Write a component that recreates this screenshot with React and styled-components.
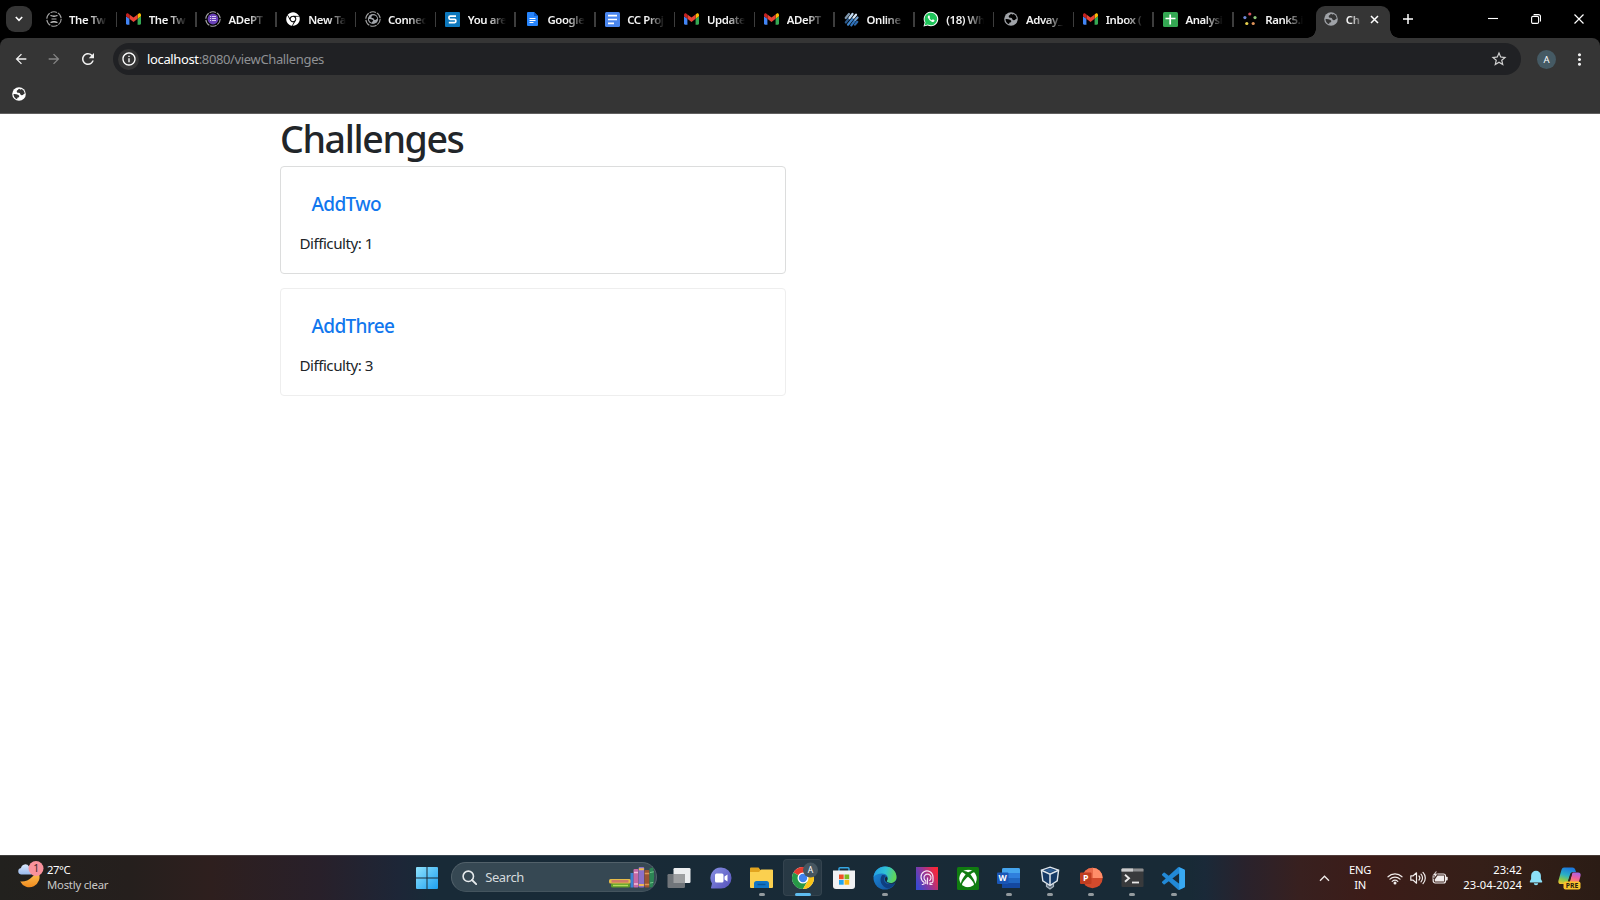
import React from "react";
import styled, { createGlobalStyle, css } from "styled-components";
import { MdArrowBack, MdArrowForward, MdRefresh, MdInfoOutline, MdStarBorder, MdMoreVert } from "react-icons/md";
import { FaChrome, FaXbox } from "react-icons/fa";

const GlobalStyle = createGlobalStyle`
  * { box-sizing: border-box; }
  html, body { margin: 0; padding: 0; }
  body { background: #fff; overflow: hidden; font-family: "Noto Sans", "Open Sans", sans-serif; }
  svg { display: block; flex: none; }
`;

const Screen = styled.div`
  width: 1600px;
  height: 900px;
  display: flex;
  flex-direction: column;
  overflow: hidden;
`;

/* ---------- browser chrome ---------- */

const TabStrip = styled.header`
  height: 38px;
  flex: none;
  background: #000;
  display: flex;
  align-items: stretch;
  padding-left: 6px;
`;

const TabSearch = styled.div`
  width: 26px;
  height: 26px;
  margin-top: 6px;
  margin-right: 5.3px;
  border-radius: 9px;
  background: #353535;
  display: flex;
  align-items: center;
  justify-content: center;
`;

const Tab = styled.div`
  width: 79.75px;
  display: flex;
  align-items: center;
  padding-left: 7.7px;
`;

const TabIcon = styled.span`
  width: 18px;
  margin-right: 6px;
  display: flex;
  justify-content: center;
`;

const TabTitle = styled.span`
  width: ${(p) => p.$width || 40}px;
  white-space: nowrap;
  color: #f4f4f4;
  font-size: 11.4px;
  font-weight: 600;
  letter-spacing: -0.4px;
  line-height: 18px;
  padding-top: 1px;
  mask-image: linear-gradient(90deg, #000 ${(p) => (p.$width ? 30 : 50)}%, transparent ${(p) => (p.$width ? 120 : 95)}%);
`;

const TabDivider = styled.span`
  width: 1.5px;
  height: 15px;
  margin-left: auto;
  background: #3d3d3d;
`;

const ActiveTab = styled.div`
  width: 74px;
  height: 32px;
  margin: 6px 0 0 2.5px;
  border-radius: 9px 9px 0 0;
  background: #353535;
  display: flex;
  align-items: center;
  padding: 0 0 6px 6px;
  position: relative;
  &::before, &::after {
    content: "";
    position: absolute;
    bottom: 0;
    width: 9px;
    height: 9px;
  }
  &::before { left: -9px; background: radial-gradient(circle at 0 0, transparent 8.5px, #353535 9px); }
  &::after { right: -9px; background: radial-gradient(circle at 100% 0, transparent 8.5px, #353535 9px); }
`;

const TabClose = styled.span`
  margin-left: 9.5px;
`;

const NewTab = styled.div`
  width: 37px;
  display: flex;
  align-items: center;
  justify-content: center;
`;

const WindowButtons = styled.div`
  margin-left: auto;
  display: flex;
  align-items: center;
`;

const WindowButton = styled.div`
  width: 43px;
  display: flex;
  justify-content: center;
`;

const ToolbarBack = styled.div`
  flex: none;
  height: 75.5px;
  background: #000;
`;

const Toolbar = styled.div`
  height: 75.5px;
  background: #353535;
  border-radius: 8px 8px 0 0;
  border-bottom: 1px solid #605f5f;
`;

const NavRow = styled.nav`
  height: 42px;
  display: flex;
  align-items: center;
  padding-left: 4px;
`;

const NavButton = styled.div`
  width: 33.5px;
  display: flex;
  justify-content: center;
  color: ${(p) => (p.$dim ? "#858585" : "#f1f1f1")};
`;

const AddressBar = styled.div`
  width: 1408px;
  height: 32px;
  margin-left: 8.5px;
  border-radius: 16px;
  background: #202124;
  display: flex;
  align-items: center;
  padding: 0 13px 0 5px;
`;

const SiteInfo = styled.span`
  width: 21px;
  height: 21px;
  border-radius: 50%;
  background: #353535;
  color: #fff;
  display: flex;
  align-items: center;
  justify-content: center;
`;

const Url = styled.span`
  margin-left: 8px;
  flex: 1;
  color: #8f9194;
  font-size: 13px;
  letter-spacing: -0.36px;
  b { font-weight: 400; color: #fff; }
`;

const Profile = styled.span`
  width: 19px;
  height: 19px;
  margin-left: 16px;
  border-radius: 50%;
  background: #455a64;
  color: #fff;
  font-size: 9.5px;
  display: flex;
  align-items: center;
  justify-content: center;
`;

const MenuButton = styled.span`
  margin-left: 14px;
  color: #f1f1f1;
`;

const BookmarkRow = styled.div`
  height: 32px;
  padding: 6px 0 0 10.5px;
`;

/* ---------- page ---------- */

const Page = styled.main`
  flex: 1;
  background: #fff;
  padding: 0 0 0 280px;
  color: #212529;
`;

const Heading = styled.h1`
  margin: 0;
  height: 52.7px;
  padding-top: 2px;
  font-size: 37.6px;
  font-weight: 500;
  line-height: 46px;
  letter-spacing: -1.4px;
`;

const Card = styled.section`
  width: 506px;
  height: 108px;
  margin-bottom: 14px;
  border: 1px solid ${(p) => p.$border};
  border-radius: 4px;
  padding: 19px 18.5px;
`;

const CardTitle = styled.a`
  display: block;
  height: 37px;
  padding: 6px 12px;
  color: #1177ee;
  font-size: 19px;
  font-weight: 500;
  line-height: 24px;
  letter-spacing: -0.65px;
`;

const CardText = styled.p`
  margin: 9px 0 0;
  font-size: 15.2px;
  line-height: 23px;
  letter-spacing: -0.5px;
`;

/* ---------- taskbar ---------- */

const Taskbar = styled.footer`
  height: 45px;
  flex: none;
  display: flex;
  align-items: stretch;
  border-top: 1px solid rgba(150, 150, 150, 0.25);
  color: #fff;
  background: linear-gradient(90deg, #22211e 0, #251f1d 130px, #2e1f1e 210px, #28202a 320px, #1d2637 398px, #182a37 430px, #182a36 1190px, #1a2938 1205px, #29222c 1245px, #38201f 1300px, #3c1c18 1370px, #351f18 1480px, #2b1c15 1600px);
`;

const Weather = styled.div`
  width: 406px;
  display: flex;
  padding-left: 17px;
`;

const WeatherIconSlot = styled.span`
  padding-top: 5px;
`;

const WeatherText = styled.div`
  padding-top: 6px;
  margin-left: 2px;
  font-size: 11.3px;
  line-height: 15px;
  letter-spacing: -0.45px;
  span { display: block; }
  span + span { color: #c9c8c7; letter-spacing: -0.22px; }
`;

const Dock = styled.div`
  display: flex;
  align-items: stretch;
`;

const DockItem = styled.div`
  width: 41.2px;
  display: flex;
  align-items: center;
  justify-content: center;
  position: relative;
  ${(p) => p.$active && css`
    &::before {
      content: "";
      position: absolute;
      inset: 3px 2px 4px 1px;
      border-radius: 4px;
      background: rgba(255, 255, 255, 0.07);
      border: 1px solid rgba(255, 255, 255, 0.06);
    }
  `}
  ${(p) => p.$open && css`
    &::after {
      content: "";
      position: absolute;
      bottom: 4px;
      left: calc(50% - ${p.$active ? 8 : 3}px);
      width: ${p.$active ? 16 : 6}px;
      height: 3px;
      border-radius: 2px;
      background: ${p.$active ? "#5fbdf0" : "#939a9e"};
    }
  `}
  svg { position: relative; }
`;

const SearchBox = styled.div`
  width: 206px;
  height: 30px;
  margin: 6px 1.6px 0 4px;
  border-radius: 15px;
  background: #364853;
  border: 1px solid #52616a;
  border-bottom-color: #44545e;
  display: flex;
  align-items: center;
  padding: 0 1px 0 10px;
  font-size: 13px;
  color: #d5dadd;
  letter-spacing: -0.4px;
  span { margin-left: 8px; flex: 1; }
`;

const Tray = styled.div`
  margin-left: auto;
  width: 283px;
  display: flex;
  align-items: center;
`;

const TrayText = styled.div`
  width: ${(p) => p.$width}px;
  text-align: ${(p) => p.$align};
  font-size: 11.2px;
  line-height: 15px;
  letter-spacing: ${(p) => p.$track}px;
  white-space: nowrap;
  padding-bottom: 2px;
`;

const TrayIcon = styled.span`
  margin-left: ${(p) => p.$gap}px;
`;

/* ---------- favicons ---------- */

const Globe = ({ land = "#a0a3a8", sea = "#353535", size = 16, ...rest }) => (
  <svg width={size} height={size} viewBox="0 0 16 16" {...rest}>
    <circle cx="8" cy="8" r="6.800" fill={land} />
    <path d="M8.300 2.800Q7.200 3 6.900 4q-1.300.3-1.200 1.700.2.900 1.200 1 1.800-.2 2 .6.2 1.600 1.600 1.900 1.600.1 2.300-1.200l.9-.3a5.600 5.600 0 0 0-3.300-4.700q-.5.600-1.200.5z" fill={sea} />
    <path d="M2.500 8q1.500-.2 3 .3 2.600.4 2.800 1.700.1 1.500-1.500 1.600-.8.400-.6 1.600A5.600 5.600 0 0 1 2.500 8z" fill={sea} />
  </svg>
);

const Gmail = () => (
  <svg width="15" height="12" viewBox="52 42 88 66">
    <path fill="#4285f4" d="M58 108h14V74L52 59v43c0 3.320 2.690 6 6 6" />
    <path fill="#34a853" d="M120 108h14c3.320 0 6-2.690 6-6V59l-20 15" />
    <path fill="#fbbc04" d="M120 48v26l20-15v-8c0-7.420-8.470-11.650-14.400-7.200" />
    <path fill="#ea4335" d="M72 74V48l24 18 24-18v26L96 92" />
    <path fill="#c5221f" d="M52 51v8l20 15V48l-5.600-4.200c-5.940-4.450-14.400-.22-14.400 7.200" />
  </svg>
);

const Ring = ({ children }) => (
  <svg width="16" height="16" viewBox="0 0 16 16">
    <circle cx="8" cy="8" r="7.200" fill="none" stroke="#a0a0a0" strokeWidth="1.100" strokeDasharray="6.500 1.040" />
    {children}
  </svg>
);

const RingTower = () => (
  <Ring>
    <path d="M4.500 4.500q3.500 1.500 7 0M4.500 11.500q3.500-1.500 7 0" stroke="#c8c8c8" strokeWidth="1.300" fill="none" />
    <path d="M5.500 8h5" stroke="#555" strokeWidth="2" />
  </Ring>
);

const RingForms = () => (
  <Ring>
    <circle cx="8" cy="8" r="5.400" fill="#6941b8" />
    <path d="M5 5.500h1M6.800 5.500h4.200M5 7.500h1M6.800 7.500h4.200M5 9.500h1M6.800 9.500h4.200" stroke="#d9ccf2" strokeWidth="1" />
  </Ring>
);

const RingGlobe = () => (
  <Ring>
    <Globe x="2" y="2" size={12} sea="#000" />
  </Ring>
);

const SLogo = () => (
  <svg width="15" height="15" viewBox="0 0 15 15">
    <rect width="15" height="15" rx="1" fill="#0d78bd" />
    <path d="M11 4.200H5.200q-1.300 0-1.300 1.600t1.300 1.600h4.400q1.300 0 1.300 1.600t-1.300 1.700H3.800" fill="none" stroke="#fff" strokeWidth="1.700" />
  </svg>
);

const DocFile = () => (
  <svg width="11" height="14" viewBox="0 0 11 14">
    <path d="M1 0h6l4 4v9a1 1 0 0 1-1 1H1a1 1 0 0 1-1-1V1a1 1 0 0 1 1-1z" fill="#2684fc" />
    <path d="M7 0l4 4H7z" fill="#0b5cd0" />
    <path d="M2.500 6.500h6M2.500 8.500h6M2.500 10.500h4" stroke="#fff" />
  </svg>
);

const DocSquare = () => (
  <svg width="15" height="15" viewBox="0 0 15 15">
    <rect width="15" height="15" rx="1.500" fill="#4a86ee" />
    <path d="M3 3.700h9M3 7.500h9M3 11.300h6" stroke="#fff" strokeWidth="1.700" />
  </svg>
);

const Sheet = () => (
  <svg width="15" height="15" viewBox="0 0 15 15">
    <rect width="15" height="15" rx="1.500" fill="#34a853" />
    <path d="M2.500 6.500h10M7.200 2.500v10" stroke="#fff" strokeWidth="1.700" />
  </svg>
);

const BlueStripes = () => (
  <svg width="15" height="15" viewBox="0 0 15 15">
    <g fill="none" strokeLinecap="round" strokeWidth="2.200">
      <path d="M1.700 6L5 2" stroke="#8199b0" />
      <path d="M1.800 10.500L4.500 7" stroke="#2c5a8c" />
      <path d="M5.500 6L8.500 2" stroke="#c3dcf3" />
      <path d="M4 12.700L8.500 7" stroke="#3f83c8" />
      <path d="M9.500 5.700L12 2.700" stroke="#d7e6f4" />
      <path d="M7.300 13.300L10.500 9" stroke="#2f73bd" />
      <path d="M11.300 8L13.500 5.500" stroke="#6f9fd0" />
      <path d="M11 12.600L13.300 9.800" stroke="#2b67ab" />
    </g>
  </svg>
);

const WhatsApp = () => (
  <svg width="16" height="16" viewBox="0 0 16 16">
    <path d="M.5 15.500L1.600 11.600A7.300 7.300 0 1 1 4.600 14.500z" fill="#fff" />
    <path d="M1.600 14.400L2.500 11.300A6.300 6.300 0 1 1 4.800 13.500z" fill="#1fc45a" />
    <path d="M5.600 4.400q-1.200.8-.8 2.200 1.200 3.200 4.300 4.300 1.700.4 2.300-.9.200-.8-.1-1L9.800 8.300l-.9.900Q7.400 8.700 6.500 7l.6-.8-.7-1.600q-.3-.4-.8-.2z" fill="#fff" />
  </svg>
);

const Dots = () => (
  <svg width="14" height="14" viewBox="0 0 14 14">
    <circle cx="6.800" cy="2" r="1.600" fill="#d0505c" />
    <circle cx="1.900" cy="5.600" r="1.600" fill="#6f86d6" />
    <circle cx="12" cy="5.600" r="1.600" fill="#8fc377" />
    <circle cx="3.800" cy="11.500" r="1.600" fill="#e6d04e" />
    <circle cx="10.200" cy="11.500" r="1.600" fill="#e0945a" />
  </svg>
);

/* ---------- taskbar drawings ---------- */

const WeatherIcon = () => (
  <svg width="28" height="28" viewBox="0 0 28 28">
    <defs>
      <linearGradient id="moon" x1="0" y1="0" x2="0" y2="1">
        <stop offset="0" stopColor="#ffc257" /><stop offset="1" stopColor="#f08b1d" />
      </linearGradient>
      <linearGradient id="cloud" x1="0" y1="0" x2="0" y2="1">
        <stop offset="0" stopColor="#d9e8fb" /><stop offset="1" stopColor="#9bbbed" />
      </linearGradient>
    </defs>
    <path d="M21.500 12.500a10 10 0 1 1-18.300 9q7 .5 11.800-4.500 2.500-2.500 6.500-4.500z" fill="url(#moon)" transform="translate(0 -1)" />
    <path d="M4 13.500a3.300 3.300 0 0 1 0-6.500 4.300 4.300 0 0 1 8-1.500q3 3 2.500 8z" fill="url(#cloud)" />
    <circle cx="19" cy="7.500" r="7.500" fill="#f9929c" />
    <text x="19.300" y="11.300" textAnchor="middle" fontSize="10.500" fill="#41262a">1</text>
  </svg>
);

const WindowsLogo = () => (
  <svg width="22" height="22" viewBox="0 0 22 22">
    <defs>
      <linearGradient id="win" x1="0" y1="0" x2="1" y2="1">
        <stop offset="0" stopColor="#8fe3fd" /><stop offset="1" stopColor="#1d9ff0" />
      </linearGradient>
    </defs>
    <path d="M1 0h9.500v10.500H0V1a1 1 0 0 1 1-1zM11.500 0H21a1 1 0 0 1 1 1v9.500H11.500zM0 11.500h10.500V22H1a1 1 0 0 1-1-1zM11.500 11.500H22V21a1 1 0 0 1-1 1h-9.500z" fill="url(#win)" />
  </svg>
);

const SearchGlyph = () => (
  <svg width="15" height="15" viewBox="0 0 15 15">
    <circle cx="6.300" cy="6.300" r="5.200" fill="none" stroke="#e6eaec" strokeWidth="1.600" />
    <path d="M10 10l4.200 4.200" stroke="#e6eaec" strokeWidth="1.800" strokeLinecap="round" />
  </svg>
);

const Books = () => (
  <svg width="47" height="24" viewBox="0 0 47 24">
    <rect x="3" y="18" width="19" height="4.500" rx="1.500" fill="#5f9e2a" />
    <path d="M5 20.500h15" stroke="#b5d95c" strokeWidth="1.400" />
    <rect x="1" y="14" width="22" height="4.500" rx="1.500" fill="#e6bb4a" />
    <rect x="3.500" y="15" width="17" height="2.600" fill="#d07a68" />
    <rect x="22.500" y="8" width="3" height="14.500" fill="#3c82d2" />
    <rect x="25.500" y="4" width="5" height="18.500" rx="1" fill="#c669a6" />
    <path d="M26 7.500h4M26 19h4" stroke="#f2bddc" strokeWidth="1.300" />
    <rect x="30.700" y="2" width="5.500" height="20.500" rx="1" fill="#8b70c8" />
    <path d="M30.900 4.200h5M30.900 20h5" stroke="#f0b951" strokeWidth="2" />
    <rect x="36.500" y="5" width="5" height="17.500" rx="1" fill="#9c5331" />
    <path d="M36.800 8.500h4.500M36.800 19.500h4.500" stroke="#dd9551" strokeWidth="1.300" />
    <path d="M41.500 3.500l3.500-1q2.500 10-.5 19.500l-3 .5z" fill="#2c8554" />
    <path d="M42 7.500l3.800-.7M42 18l3.300-.6" stroke="#74c48b" />
  </svg>
);

const TaskView = () => (
  <svg width="24" height="22" viewBox="0 0 24 22">
    <rect x="6.500" y="1" width="17" height="15" rx="1.200" fill="#eceef0" />
    <rect x="0.500" y="7" width="17.500" height="14" rx="1.200" fill="#70757a" />
    <rect x="6.500" y="7" width="11.500" height="9" fill="#9d9fa1" />
  </svg>
);

const Chat = () => (
  <svg width="22" height="22" viewBox="0 0 22 22">
    <defs>
      <linearGradient id="chat" x1="0" y1="0" x2="1" y2="1">
        <stop offset="0" stopColor="#8790e2" /><stop offset="1" stopColor="#5550bc" />
      </linearGradient>
    </defs>
    <path d="M11 0.500a10.500 10.500 0 1 1 0 21H1.500q-.8-.5-.3-1.500l.8-3.500A10.500 10.500 0 0 1 11 .5z" fill="url(#chat)" />
    <rect x="5" y="6.500" width="8.500" height="9" rx="1.500" fill="#fff" />
    <path d="M14.500 9.500l3-2v7l-3-2z" fill="#fff" />
  </svg>
);

const Explorer = () => (
  <svg width="23" height="22" viewBox="0 0 23 22">
    <path d="M1 0.500h7.500l2 2.500H22a1 1 0 0 1 1 1v5H0V1.500a1 1 0 0 1 1-1z" fill="#e2a41f" />
    <path d="M0 5h9l2.200-2.500H22a1 1 0 0 1 1 1V20a1 1 0 0 1-1 1H1a1 1 0 0 1-1-1z" fill="#fbd04f" />
    <path d="M4 21v-4.500a2.500 2.500 0 0 1 2.500-2.500h10a2.500 2.500 0 0 1 2.500 2.500V21z" fill="#1174c5" />
    <path d="M7.500 17.500h8" stroke="#0c5699" strokeWidth="1.500" />
  </svg>
);

const ChromeLogo = () => (
  <svg width="30" height="32" viewBox="0 0 30 32">
    <g transform="translate(4 5)">
      <circle cx="11" cy="11" r="11" fill="#fff" />
      <path d="M11 11L1.470 5.500A11 11 0 0 1 20.530 5.500z" fill="#e33b2e" />
      <path d="M1.470 5.500A11 11 0 0 0 11 22L15.800 13.700 11 11z" fill="#279847" />
      <path d="M20.530 5.500A11 11 0 0 1 11 22L15.800 13.700 11 5.500z" fill="#fbc518" />
      <circle cx="11" cy="11" r="5.500" fill="#fff" />
      <circle cx="11" cy="11" r="4.200" fill="#3f82ee" />
    </g>
    <circle cx="22.500" cy="8" r="7.500" fill="#465660" />
    <text x="22.500" y="11.200" textAnchor="middle" fontSize="8.500" fill="#fff">A</text>
  </svg>
);

const Store = () => (
  <svg width="22" height="22" viewBox="0 0 22 22">
    <path d="M6 4V1.800Q6 .8 7 .8h8q1 0 1 1V4" fill="none" stroke="#35a7e4" strokeWidth="1.400" />
    <path d="M0 3.500h22V19a3 3 0 0 1-3 3H3a3 3 0 0 1-3-3z" fill="#f0f1f3" />
    <path d="M6 7.500h4.700v4.700H6z" fill="#f04f25" />
    <path d="M11.500 7.500h4.700v4.700h-4.700z" fill="#7dba1f" />
    <path d="M6 13h4.700v4.700H6z" fill="#20a4ee" />
    <path d="M11.500 13h4.700v4.700h-4.700z" fill="#fcb813" />
  </svg>
);

const Edge = () => (
  <svg width="24" height="24" viewBox="0 0 24 24">
    <defs>
      <linearGradient id="edgeTop" x1="0" y1="0.300" x2="1" y2="0.500">
        <stop offset="0" stopColor="#249ee3" /><stop offset="0.500" stopColor="#2fc2d6" /><stop offset="1" stopColor="#63d64e" />
      </linearGradient>
      <linearGradient id="edgeLow" x1="0" y1="0" x2="1" y2="1">
        <stop offset="0" stopColor="#1b8fe0" /><stop offset="1" stopColor="#134a93" />
      </linearGradient>
    </defs>
    <circle cx="12" cy="12" r="11.500" fill="url(#edgeLow)" />
    <path d="M.6 11C1.500 4.500 6.500.5 12 .5c7 0 11.500 5 11.500 10.500 0 4-3 6-6 6-3.300 0-4.200-1.500-3.500-2.500 2.200-3.500-.5-7-5-7-4 0-7 1.500-8.400 3.500z" fill="url(#edgeTop)" />
    <path d="M9 9.200c-3.300 4.200-1 11.800 6.500 13.300 3-1 5.200-3 6.500-5.500-4.500 2.500-9.800 1.200-10.800-2.300-.5-2 .4-3.600 1.800-4.600-1-.9-2.500-1.200-4-.9z" fill="#0f3f80" />
    <path d="M13.400 10.600c-2.700 1.900-1.900 5.700 2.600 7 3.500.8 6-.6 6.600-1.200.4-.3.900.1.500.8l2-5-3 3.300c-2 1.800-5.400 1.900-7.600.7-1.500-.8-.5-1.600-.2-2.300.5-1.200.2-2.400-.9-3.300z" fill="#182a36" />
  </svg>
);

const HeadApp = () => (
  <svg width="22" height="23" viewBox="0 0 22 23">
    <defs>
      <linearGradient id="head" x1="0" y1="0.700" x2="1" y2="0.200">
        <stop offset="0" stopColor="#3b48d0" /><stop offset="0.450" stopColor="#8f379c" /><stop offset="0.850" stopColor="#e82a4a" /><stop offset="1" stopColor="#fb2636" />
      </linearGradient>
    </defs>
    <rect width="22" height="23" fill="url(#head)" />
    <g fill="none" stroke="#f6e2f4" strokeWidth="1.200" strokeLinejoin="round">
      <path d="M7.500 17.500H5.800M8 17.500v-2.300A6 6 0 1 1 17 10v4q0 1.800-1.500 1.800H14v1.700h2.500" />
      <path d="M9.800 17v-3.300a3.500 3.500 0 1 1 3.400 0M11.500 17.500v-7" />
    </g>
  </svg>
);

const XboxTile = () => (
  <svg width="22" height="23" viewBox="0 0 22 23">
    <rect width="22" height="23" rx="1.500" fill="#107c10" />
    <FaXbox x="2" y="2.500" size={18} color="#fff" />
  </svg>
);

const Word = () => (
  <svg width="23" height="22" viewBox="0 0 23 22">
    <rect x="5" y="1" width="18" height="20" rx="1.500" fill="#2067c2" />
    <path d="M5 6V2.500Q5 1 6.500 1h15Q23 1 23 2.500V6z" fill="#45a5ee" />
    <path d="M5 6h18v5H5z" fill="#2f7fdd" />
    <path d="M5 16h18v3.500q0 1.500-1.500 1.500h-15Q5 21 5 19.500z" fill="#1448a0" />
    <rect x="0" y="5.500" width="11.500" height="11.500" rx="1" fill="#1a56b5" />
    <text x="5.700" y="14.400" textAnchor="middle" fontSize="8.500" fontWeight="700" fill="#fff">W</text>
  </svg>
);

const VirtualBox = () => (
  <svg width="20" height="24" viewBox="0 0 20 24">
    <path d="M6.500 18v2.500L10 23l3.500-2.500V18" fill="#5c6c7b" stroke="#aab6c0" strokeWidth="1.200" />
    <path d="M10 1.200l8.600 3-1.400 10.600-7.200 4.700-7.200-4.700L1.400 4.200z" fill="#173b66" stroke="#dfe6ec" strokeWidth="1.400" />
    <path d="M1.400 4.200L10 8.200l8.600-4M10 8.200v11" fill="none" stroke="#dfe6ec" strokeWidth="1.500" />
    <path d="M4.500 4.300L10 2.400l5.500 1.900L10 6.800z" fill="#2e5c8f" />
  </svg>
);

const PowerPoint = () => (
  <svg width="23" height="22" viewBox="0 0 23 22">
    <circle cx="12.500" cy="11" r="10.200" fill="#d24a2c" />
    <path d="M12.500.8A10.200 10.200 0 0 1 22.700 11H12.500z" fill="#ff8d69" />
    <path d="M2.300 11a10.200 10.200 0 0 1 10.200-10.200V11z" fill="#ea6b4b" />
    <rect x="0" y="5.500" width="11.500" height="11.500" rx="1" fill="#c03d20" />
    <text x="5.800" y="14.400" textAnchor="middle" fontSize="8.800" fontWeight="700" fill="#fff">P</text>
  </svg>
);

const Terminal = () => (
  <svg width="23" height="20" viewBox="0 0 23 20">
    <rect x="0.500" y="0.500" width="22" height="18.500" rx="1" fill="#383a3c" />
    <path d="M.5 3.500V1.500q0-1 1-1h20q1 0 1 1v2z" fill="#8b8d8f" />
    <path d="M.5 3.500V1.500q0-1 1-1H12v3z" fill="#cbcccd" />
    <path d="M4 6.800l4 3.500-4 3.500" fill="none" stroke="#e8e8e8" strokeWidth="1.900" />
    <path d="M11 14.500h7" stroke="#e8e8e8" strokeWidth="1.800" />
  </svg>
);

const VsCode = () => (
  <svg width="23" height="23" viewBox="0 0 24 24">
    <path fill="#2289d6" d="M23.150 2.587L18.210.21a1.494 1.494 0 0 0-1.705.29l-9.460 8.630-4.120-3.128a.999.999 0 0 0-1.276.057L.327 7.261A1 1 0 0 0 .326 8.740L3.899 12 .326 15.260a1 1 0 0 0 .001 1.479L1.650 17.940a.999.999 0 0 0 1.276.057l4.120-3.128 9.460 8.630a1.492 1.492 0 0 0 1.704.29l4.942-2.377A1.500 1.500 0 0 0 24 20.060V3.939a1.500 1.500 0 0 0-.85-1.352zm-5.146 14.861L10.826 12l7.178-5.448v10.896z" />
    <path fill="#38a9f2" d="M18 .2l5.200 2.400q.8.400.8 1.400v16q0 1-.8 1.400L18 23.800z" />
  </svg>
);

const Wifi = () => (
  <svg width="16" height="13" viewBox="0 0 16 13">
    <g fill="none" stroke="#f1eceb" strokeWidth="1.200" strokeLinecap="round">
      <path d="M1 4.800a10 10 0 0 1 14 0" />
      <path d="M3 7.200a7 7 0 0 1 10 0" />
      <path d="M5.200 9.400a4.200 4.200 0 0 1 5.600 0" />
    </g>
    <circle cx="8" cy="11" r="1.500" fill="#f1eceb" />
  </svg>
);

const Speaker = () => (
  <svg width="16" height="14" viewBox="0 0 16 14">
    <g fill="none" stroke="#f1eceb" strokeWidth="1.200" strokeLinecap="round" strokeLinejoin="round">
      <path d="M.8 4.800h2.400l3.300-3v10.400l-3.300-3H.8z" />
      <path d="M9 5a3 3 0 0 1 0 4M11 3.200a5.500 5.500 0 0 1 0 7.600M13 1.400a8 8 0 0 1 0 11.200" />
    </g>
  </svg>
);

const Battery = () => (
  <svg width="16" height="14" viewBox="0 0 16 14">
    <rect x="1.200" y="3" width="12.300" height="9" rx="2" fill="none" stroke="#f1eceb" strokeWidth="1.200" />
    <path d="M2.800 10.600V8.500L5.500 4.500h6.600v6.100z" fill="#f1eceb" />
    <path d="M14 5.700h.8q.9 0 .9.900v1.900q0 .9-.9.900H14z" fill="#f1eceb" />
    <path d="M4 0L.5 4.500h2L1.500 8l4.300-5H3.700L5 0z" fill="#f1eceb" stroke="#3a1d18" strokeWidth="0.500" />
  </svg>
);

const Bell = () => (
  <svg width="14" height="16" viewBox="0 0 14 16">
    <path d="M7 .8a4.900 4.900 0 0 1 4.900 4.900v3.200l1.300 2.700q.3.900-.6.900H1.400q-.9 0-.6-.9l1.300-2.700V5.700A4.900 4.900 0 0 1 7 .8z" fill="#8ce0f8" />
    <path d="M4.800 13.300h4.400a2.200 1.900 0 0 1-4.400 0z" fill="#8ce0f8" />
  </svg>
);

const Copilot = () => (
  <svg width="24" height="23" viewBox="0 0 24 23">
    <defs>
      <linearGradient id="copA" x1="0.500" y1="0" x2="0.200" y2="1">
        <stop offset="0" stopColor="#1c78dd" /><stop offset="0.450" stopColor="#2bb1c4" /><stop offset="0.750" stopColor="#8bc94a" /><stop offset="1" stopColor="#f3c52e" />
      </linearGradient>
      <linearGradient id="copB" x1="0.600" y1="0" x2="0.300" y2="1">
        <stop offset="0" stopColor="#a764e8" /><stop offset="0.500" stopColor="#ee5f9d" /><stop offset="1" stopColor="#fb8f55" />
      </linearGradient>
    </defs>
    <path d="M6 .5h8.500q2 0 2.700 2l.8 2.500h-3q-2 0-2.700 2L9.500 15.500Q9 17 7 17H3Q-.5 17 .6 13L3.500 2.800Q4.200.5 6 .5z" fill="url(#copA)" />
    <path d="M15 5.500h5q3.300 0 2.500 3.500l-1.800 6.500H11.500l2.300-8q.5-2 1.200-2z" fill="url(#copB)" />
    <path d="M12.500 6.500L10 15h1.700l2.500-8.500z" fill="#33201b" />
    <rect x="5.500" y="14.500" width="17" height="8" rx="2" fill="#f9c22c" />
    <text x="14" y="21.200" textAnchor="middle" fontSize="6.800" fontWeight="700" fill="#2a1c10">PRE</text>
  </svg>
);

/* ---------- data ---------- */

const tabs = [
  { title: "The Tw", icon: <RingTower /> },
  { title: "The Tw", icon: <Gmail /> },
  { title: "ADePT", icon: <RingForms /> },
  { title: "New Ta", icon: <FaChrome size={14} color="#fff" /> },
  { title: "Connec", icon: <RingGlobe /> },
  { title: "You are", icon: <SLogo /> },
  { title: "Google", icon: <DocFile /> },
  { title: "CC Proj", icon: <DocSquare /> },
  { title: "Update", icon: <Gmail /> },
  { title: "ADePT", icon: <Gmail /> },
  { title: "Online", icon: <BlueStripes /> },
  { title: "(18) Wh", icon: <WhatsApp /> },
  { title: "Advay_", icon: <Globe sea="#000" /> },
  { title: "Inbox (", icon: <Gmail /> },
  { title: "Analysi", icon: <Sheet /> },
  { title: "Rank5.i", icon: <Dots /> },
];

const challenges = [
  { name: "AddTwo", difficulty: 1, border: "#dcdddd" },
  { name: "AddThree", difficulty: 3, border: "#eeeeee" },
];

const dock = [
  { id: "taskview", icon: <TaskView /> },
  { id: "chat", icon: <Chat /> },
  { id: "explorer", icon: <Explorer />, open: true },
  { id: "chrome", icon: <ChromeLogo />, open: true, active: true },
  { id: "store", icon: <Store /> },
  { id: "edge", icon: <Edge />, open: true },
  { id: "head", icon: <HeadApp /> },
  { id: "xbox", icon: <XboxTile /> },
  { id: "word", icon: <Word />, open: true },
  { id: "vbox", icon: <VirtualBox />, open: true },
  { id: "ppt", icon: <PowerPoint />, open: true },
  { id: "terminal", icon: <Terminal />, open: true },
  { id: "vscode", icon: <VsCode />, open: true },
];

export default function App() {
  return (
    <Screen>
      <GlobalStyle />
      <TabStrip>
        <TabSearch>
          <svg width="8" height="6" viewBox="0 0 8 6"><path d="M.8 1L4 4.300 7.200 1" fill="none" stroke="#fff" strokeWidth="1.600" /></svg>
        </TabSearch>
        {tabs.map((t, i) => (
          <Tab key={i}>
            <TabIcon>{t.icon}</TabIcon>
            <TabTitle>{t.title}</TabTitle>
            {i < tabs.length - 1 && <TabDivider />}
          </Tab>
        ))}
        <ActiveTab>
          <TabIcon><Globe /></TabIcon>
          <TabTitle $width={15}>Ch</TabTitle>
          <TabClose>
            <svg width="9" height="9" viewBox="0 0 9 9"><path d="M1 1l7 7M8 1L1 8" stroke="#fff" strokeWidth="1.500" /></svg>
          </TabClose>
        </ActiveTab>
        <NewTab>
          <svg width="10" height="10" viewBox="0 0 10 10"><path d="M5 0v10M0 5h10" stroke="#fff" strokeWidth="1.500" /></svg>
        </NewTab>
        <WindowButtons>
          <WindowButton><svg width="10" height="10" viewBox="0 0 10 10"><path d="M0 4.500h10" stroke="#fff" strokeWidth="1.100" /></svg></WindowButton>
          <WindowButton>
            <svg width="10" height="10" viewBox="0 0 10 10">
              <rect x="0.600" y="2.400" width="7" height="7" rx="1.400" fill="none" stroke="#fff" strokeWidth="1.100" />
              <path d="M2.600.6h4.900a2 2 0 0 1 2 2v4.800" fill="none" stroke="#fff" strokeWidth="1.100" />
            </svg>
          </WindowButton>
          <WindowButton><svg width="10" height="10" viewBox="0 0 10 10"><path d="M.5.5l9 9M9.500.5l-9 9" stroke="#fff" strokeWidth="1.200" /></svg></WindowButton>
        </WindowButtons>
      </TabStrip>

      <ToolbarBack>
        <Toolbar>
          <NavRow>
            <NavButton><MdArrowBack size={16} /></NavButton>
            <NavButton $dim><MdArrowForward size={16} /></NavButton>
            <NavButton><MdRefresh size={18} /></NavButton>
            <AddressBar>
              <SiteInfo><MdInfoOutline size={16} /></SiteInfo>
              <Url><b>localhost</b>:8080/viewChallenges</Url>
              <MdStarBorder size={18} color="#d0d0d0" />
            </AddressBar>
            <Profile>A</Profile>
            <MenuButton><MdMoreVert size={19} /></MenuButton>
          </NavRow>
          <BookmarkRow><Globe land="#fff" /></BookmarkRow>
        </Toolbar>
      </ToolbarBack>

      <Page>
        <Heading>Challenges</Heading>
        {challenges.map((c) => (
          <Card key={c.name} $border={c.border}>
            <CardTitle>{c.name}</CardTitle>
            <CardText>Difficulty: {c.difficulty}</CardText>
          </Card>
        ))}
      </Page>

      <Taskbar>
        <Weather>
          <WeatherIconSlot><WeatherIcon /></WeatherIconSlot>
          <WeatherText><span>27°C</span><span>Mostly clear</span></WeatherText>
        </Weather>
        <Dock>
          <DockItem><WindowsLogo /></DockItem>
          <SearchBox><SearchGlyph /><span>Search</span><Books /></SearchBox>
          {dock.map((d) => (
            <DockItem key={d.id} $open={d.open} $active={d.active}>{d.icon}</DockItem>
          ))}
        </Dock>
        <Tray>
          <TrayIcon $gap={2}>
            <svg width="11" height="7" viewBox="0 0 11 7"><path d="M1 5.800L5.500 1.200 10 5.800" fill="none" stroke="#f1eceb" strokeWidth="1.300" /></svg>
          </TrayIcon>
          <TrayIcon $gap={14}><TrayText $width={32} $align="center" $track={-0.3}>ENG<br />IN</TrayText></TrayIcon>
          <TrayIcon $gap={11}><Wifi /></TrayIcon>
          <TrayIcon $gap={6.5}><Speaker /></TrayIcon>
          <TrayIcon $gap={6.5}><Battery /></TrayIcon>
          <TrayIcon $gap={8}><TrayText $width={66} $align="right" $track={0.03}>23:42<br />23-04-2024</TrayText></TrayIcon>
          <TrayIcon $gap={6.5}><Bell /></TrayIcon>
          <TrayIcon $gap={15}><Copilot /></TrayIcon>
        </Tray>
      </Taskbar>
    </Screen>
  );
}
